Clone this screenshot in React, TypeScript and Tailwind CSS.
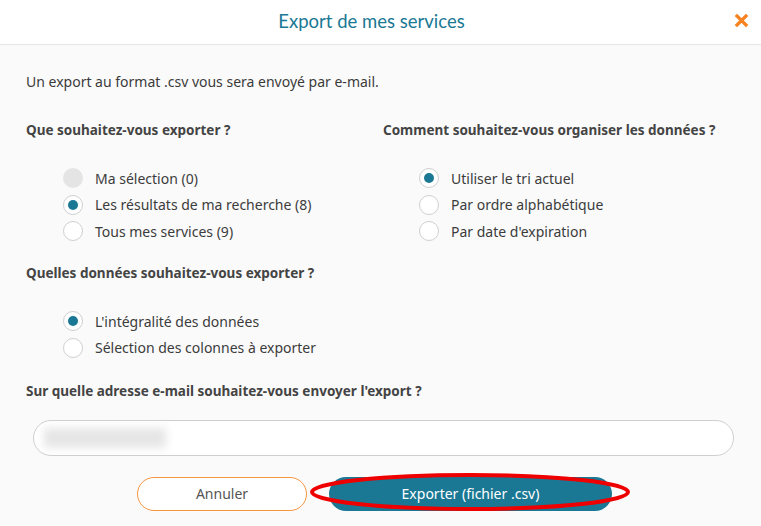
import React from "react";

type RadioOption = {
  label: string;
  checked?: boolean;
  disabled?: boolean;
};

function Radio({ label, checked, disabled }: RadioOption) {
  return (
    <label className="flex h-5 items-center gap-[12px]">
      <span
        className={
          disabled
            ? "h-5 w-5 shrink-0 rounded-full bg-[#e4e4e4]"
            : "flex h-5 w-5 shrink-0 items-center justify-center rounded-full border border-[#cfcfcf] bg-white"
        }
      >
        {checked ? <span className="h-[10px] w-[10px] rounded-full bg-[#1a7894]" /> : null}
      </span>
      <span className="text-[14px] text-[#3c3c3c]">{label}</span>
    </label>
  );
}

function RadioGroup({ options, indent }: { options: RadioOption[]; indent: string }) {
  return (
    <div className={`mt-[28px] flex flex-col gap-[6.5px] ${indent}`}>
      {options.map((option) => (
        <Radio key={option.label} {...option} />
      ))}
    </div>
  );
}

const font = { fontFamily: "'Noto Sans', 'Open Sans', sans-serif" };

export default function App() {
  return (
    <div className="relative h-[526px] w-[761px] overflow-hidden bg-[#fafafa]" style={font}>
      <header className="flex h-[45px] items-center justify-center border-b border-[#e6e6e6] bg-white">
        <h1
          className="mr-[18px] text-[18.5px] text-[#1a7894]"
          style={{ fontFamily: "Lato, 'Noto Sans', sans-serif" }}
        >
          Export de mes services
        </h1>
        <button className="absolute right-[10px] top-[10px] flex h-[20px] w-[20px] items-center justify-center">
          <svg viewBox="0 0 16 16" className="h-[15px] w-[15px]">
            <path d="M2 2 L14 14 M14 2 L2 14" stroke="#f7821f" strokeWidth="3.6" strokeLinecap="butt" />
          </svg>
        </button>
      </header>

      <main className="px-[26px] pt-[27px]">
        <p className="h-5 text-[14px] leading-5 text-[#3a3a3a]">
          Un export au format .csv vous sera envoyé par e-mail.
        </p>

        <div className="mt-[28px] grid grid-cols-[357px_1fr]">
          <section>
            <h2 className="h-5 text-[13.5px] font-bold leading-5 text-[#444]">
              Que souhaitez-vous exporter ?
            </h2>
            <RadioGroup
              indent="pl-[37px]"
              options={[
                { label: "Ma sélection (0)", disabled: true },
                { label: "Les résultats de ma recherche (8)", checked: true },
                { label: "Tous mes services (9)" }
              ]}
            />
          </section>
          <section>
            <h2 className="h-5 text-[13.5px] font-bold leading-5 text-[#444]">
              Comment souhaitez-vous organiser les données ?
            </h2>
            <RadioGroup
              indent="pl-[36px]"
              options={[
                { label: "Utiliser le tri actuel", checked: true },
                { label: "Par ordre alphabétique" },
                { label: "Par date d'expiration" }
              ]}
            />
          </section>
        </div>

        <h2 className="mt-[22px] h-5 text-[13.5px] font-bold leading-5 text-[#444]">
          Quelles données souhaitez-vous exporter ?
        </h2>
        <RadioGroup
          indent="pl-[37px]"
          options={[
            { label: "L'intégralité des données", checked: true },
            { label: "Sélection des colonnes à exporter" }
          ]}
        />

        <h2 className="mt-[23px] h-5 text-[13.5px] font-bold leading-5 text-[#444]">
          Sur quelle adresse e-mail souhaitez-vous envoyer l'export ?
        </h2>

        <div className="ml-[7px] mt-[19px] flex h-[36px] w-[701px] items-center rounded-full border border-[#cfcfcf] bg-white px-[10px]">
          <div className="h-[20px] w-[122px] bg-[#e6e6e6] blur-[4px]" />
        </div>

        <div className="ml-[111px] mt-[21px] flex gap-[22px]">
          <button className="h-[34px] w-[170px] rounded-full border border-[#f7943e] bg-white text-[14px] text-[#555]">
            Annuler
          </button>
          <button className="h-[34px] w-[283px] rounded-full bg-[#1a7894] text-[14px] text-white">
            Exporter (fichier .csv)
          </button>
        </div>
      </main>

      <svg className="pointer-events-none absolute left-[308px] top-[471px]" width="324" height="42">
        <ellipse cx="162" cy="21" rx="158" ry="17" fill="none" stroke="#ee0000" strokeWidth="4" />
      </svg>
    </div>
  );
}
